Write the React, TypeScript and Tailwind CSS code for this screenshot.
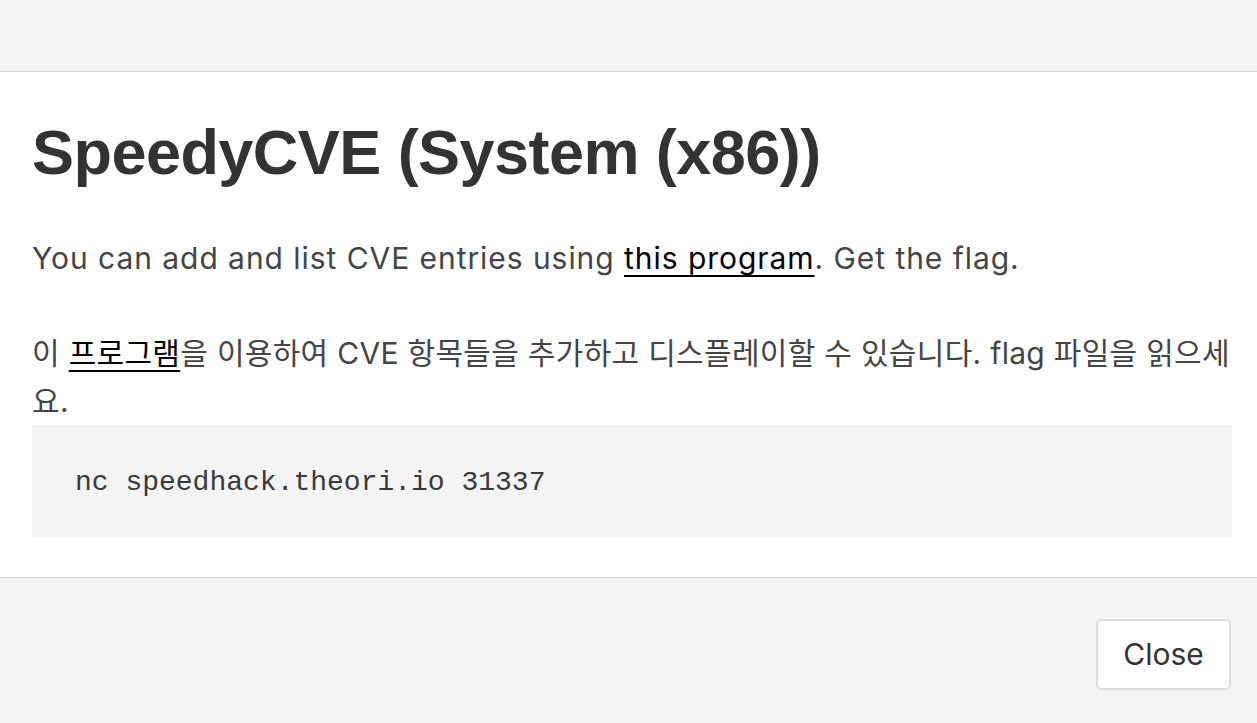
export default function App() {
  return (
    <div className="w-[1257px] h-[723px] bg-[#f4f4f4] flex flex-col overflow-hidden" style={{ fontFamily: "Inter, 'Noto Sans CJK KR', sans-serif" }}>
      <div className="h-[72px] bg-[#f4f4f4] border-b border-[#d6d6d6] shrink-0" />
      <div className="bg-white pl-[32px] pr-[25px] pt-[30px] pb-[40px] border-b border-[#d6d6d6] shrink-0">
        <h1 className="text-[63px] leading-[100px] font-bold text-[#333333] tracking-[-0.55px]" style={{ fontFamily: "'Liberation Sans', 'Noto Sans CJK KR', sans-serif" }}>
          SpeedyCVE (System (x86))
        </h1>
        <p className="mt-[32px] text-[30px] leading-[48px] text-[#454545] tracking-[0.95px]">
          You can add and list CVE entries using <a className="text-black underline underline-offset-[6px] decoration-[2px]" href="#">this program</a>. Get the flag.
        </p>
        <p className="mt-[47px] text-[30px] leading-[48px] text-[#454545] tracking-[0.3px]">
          이 <a className="text-black underline underline-offset-[6px] decoration-[2px]" href="#">프로그램</a>을 이용하여 CVE 항목들을 추가하고 디스플레이할 수 있습니다. flag 파일을 읽으세요.
        </p>
        <pre className="mt-0 bg-[#f4f4f4] h-[112px] px-[43px] pt-[3px] flex items-center text-[28px] text-[#3a3a3a] font-medium" style={{ fontFamily: "'Liberation Mono', monospace" }}>
          nc speedhack.theori.io 31337
        </pre>
      </div>
      <div className="flex-1 flex justify-end items-start pr-[26px] pt-[41px]">
        <button className="w-[135px] h-[71px] bg-white border-2 border-[#dcdcdc] rounded-[5px] text-[30px] text-[#333333]">
          Close
        </button>
      </div>
    </div>
  );
}
